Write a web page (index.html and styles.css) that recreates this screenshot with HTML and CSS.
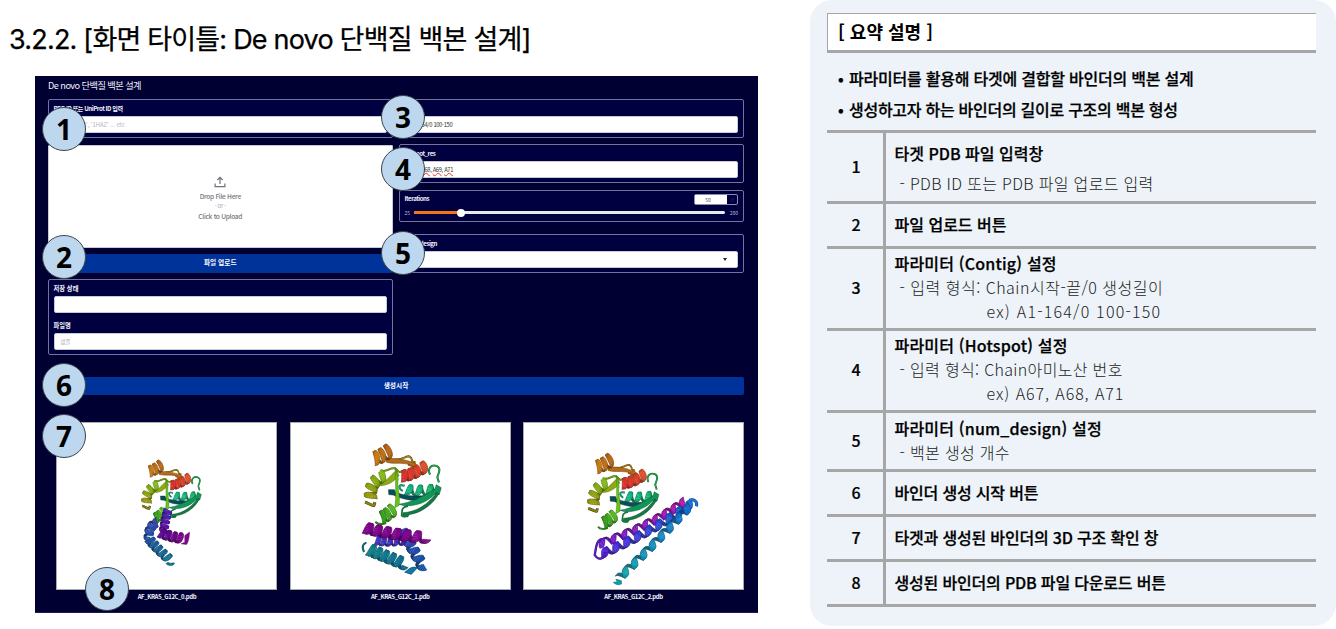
FILE: index.html
```html
<!DOCTYPE html>
<html lang="ko">
<head>
<meta charset="utf-8">
<title>De novo 단백질 백본 설계</title>
<link rel="stylesheet" href="styles.css">
</head>
<body>
<main class="slide">
  <section class="left">
    <h1 class="heading">3.2.2. [화면 타이틀: De novo 단백질 백본 설계]</h1>
    <div class="app">
      <h2 class="app-title">De novo 단백질 백본 설계</h2>
      <div class="columns">
        <div class="col col-input">
          <div class="block"><label class="label latin">PDB ID 또는 UniProt ID 입력</label><div class="field placeholder">Ex) '4HRR', '1HAZ' ... etc</div></div>
          <div class="drop">
            <svg class="drop-icon" viewBox="0 0 12 12"><path d="M6 8V1.4M3.4 4L6 1.3 8.600 4M1.100 7.500V10.700H10.900V7.500"/></svg>
            <span>Drop File Here</span><span class="or">- or -</span><span>Click to Upload</span>
          </div>
          <div class="button upload">파일 업로드</div>
          <div class="block form">
            <label class="label">저장 상태</label><div class="field"></div>
            <label class="label second">파일명</label><div class="field placeholder">샘플</div>
          </div>
        </div>
        <div class="col col-params">
          <div class="block"><label class="label latin">Contig</label><div class="field value">A1-164/0 100-150</div></div>
          <div class="block"><label class="label latin">hotspot_res</label><div class="field value"><span class="spell">A67</span>,<span class="spell">A68</span>, <span class="spell">A69</span>, <span class="spell">A71</span></div></div>
          <div class="block iterations">
            <div class="iter-head"><label class="label latin">Iterations</label><div class="number"><span>50</span><i>↺</i></div></div>
            <div class="slider"><span>25</span><div class="track"><div class="fill"></div><div class="thumb"></div></div><span>200</span></div>
          </div>
          <div class="block design"><label class="label latin">num_design</label><div class="field select"><svg class="caret" viewBox="0 0 4 3"><path d="M0 0H4L2 3Z"/></svg></div></div>
        </div>
      </div>
      <div class="button generate">생성시작</div>
      <div class="cards">
        <figure class="card"><svg class="view" id="model0" viewBox="50 65 663 503"></svg><figcaption>AF_KRAS_G12C_0.pdb</figcaption></figure>
        <figure class="card"><svg class="view" id="model1" viewBox="30 20 663 503"></svg><figcaption>AF_KRAS_G12C_1.pdb</figcaption></figure>
        <figure class="card"><svg class="view" id="model2" viewBox="24 20 663 503"></svg><figcaption>AF_KRAS_G12C_2.pdb</figcaption></figure>
      </div>
      <span class="badge b1">1</span><span class="badge b2">2</span><span class="badge b3">3</span><span class="badge b4">4</span>
      <span class="badge b5">5</span><span class="badge b6">6</span><span class="badge b7">7</span><span class="badge b8">8</span>
    </div>
  </section>
  <aside class="summary">
    <h2 class="summary-title">[ 요약 설명 ]</h2>
    <ul class="points">
      <li><b>•</b><span class="p1">파라미터를 활용해 타겟에 결합할 바인더의 백본 설계</span></li>
      <li><b>•</b><span class="p2">생성하고자 하는 바인더의 길이로 구조의 백본 형성</span></li>
    </ul>
    <div class="table">
      <div class="row r1"><div class="num">1</div><div class="desc"><strong>타겟 PDB 파일 입력창</strong><p>- PDB ID 또는 PDB 파일 업로드 입력</p></div></div>
      <div class="row r2"><div class="num">2</div><div class="desc"><strong>파일 업로드 버튼</strong></div></div>
      <div class="row r3"><div class="num">3</div><div class="desc"><strong class="wide">파라미터 (Contig) 설정</strong><p class="long">- 입력 형식: Chain시작-끝/0 생성길이</p><p class="ex ex-contig">ex) A1-164/0 100-150</p></div></div>
      <div class="row r4"><div class="num">4</div><div class="desc"><strong class="wide">파라미터 (Hotspot) 설정</strong><p>- 입력 형식: Chain아미노산 번호</p><p class="ex">ex) A67, A68, A71</p></div></div>
      <div class="row r5"><div class="num">5</div><div class="desc"><strong class="wide">파라미터 (num_design) 설정</strong><p>- 백본 생성 개수</p></div></div>
      <div class="row r6"><div class="num">6</div><div class="desc"><strong class="tight">바인더 생성 시작 버튼</strong></div></div>
      <div class="row r7"><div class="num">7</div><div class="desc"><strong class="tight">타겟과 생성된 바인더의 3D 구조 확인 창</strong></div></div>
      <div class="row r8"><div class="num">8</div><div class="desc"><strong class="tight">생성된 바인더의 PDB 파일 다운로드 버튼</strong></div></div>
    </div>
  </aside>
</main>
<script src="models.js"></script>
</body>
</html>
```
FILE: styles.css
```css
* { box-sizing: border-box; }
body { margin: 0; background: #fff; color: #000; font-family: "Noto Sans CJK KR", "Noto Sans", sans-serif; }
h1, h2, p, ul, figure { margin: 0; padding: 0; }
.slide { display: flex; width: 1336px; height: 629px; overflow: hidden; }
.left { width: 810px; flex: none; }
.heading { height: 76px; padding-left: 9px; font-family: Inter, "Noto Sans CJK KR", sans-serif; font-size: 27px; font-weight: 400; line-height: 79px; letter-spacing: -0.8px; white-space: nowrap; -webkit-text-stroke: 0.25px #000; }

.app { position: relative; width: 723px; height: 536.5px; margin-left: 35px; padding: 0 14px 0 13px; background: #000033; color: #f2f2fa; font-size: 6.4px; border-bottom: 1px solid #1b1b50; }
.app-title { height: 23px; line-height: 18px; font-size: 9.2px; font-weight: 400; letter-spacing: -0.55px; white-space: nowrap; }
.columns { display: grid; grid-template-columns: 344.5px 344.5px; column-gap: 6.5px; height: 256px; }
.col { display: flex; flex-direction: column; }
.block { flex: none; height: 38.5px; padding: 3.5px 4.5px 0; background: #000040; border: 1px solid #74749b; border-radius: 2px; }
.label { display: block; height: 12.5px; line-height: 9px; font-size: 6.3px; font-weight: 600; white-space: nowrap; }
.latin { font-size: 6.1px; letter-spacing: -0.45px; }
.field { height: 17px; padding-left: 5.5px; background: #fff; border: 1px solid #c9c9d8; border-radius: 2px; line-height: 15px; font-size: 5.8px; color: #333; white-space: pre; }
.value { letter-spacing: -0.35px; }
.placeholder { color: #b4b4bc; }
.drop { display: flex; flex-direction: column; align-items: center; height: 103.5px; margin-top: 7px; padding: 30px 0 0 0; background: #fff; border: 1px solid #c9c9d8; border-radius: 1px; color: #777780; font-size: 6.6px; font-weight: 500; letter-spacing: -0.3px; line-height: 10.2px; }
.drop-icon { width: 12px; height: 12px; margin-bottom: 3px; fill: none; stroke: #70707a; stroke-width: 1.2; }
.or { color: #aaaab2; font-size: 6px; font-weight: 400; }
.button { background: #003399; color: #fff; font-weight: 600; font-size: 6.7px; text-align: center; border-radius: 2px; }
.upload { height: 19px; margin-top: 6px; line-height: 17px; }
.form { height: 76px; margin-top: 6px; }
.second { margin-top: 7.5px; }
.col-params { gap: 6.8px; }
.spell { text-decoration-line: underline; text-decoration-style: wavy; text-decoration-color: #f03030; text-decoration-thickness: 0.5px; text-underline-offset: 0; }
.iterations { height: 32px; }
.iter-head { display: flex; justify-content: space-between; height: 13px; }
.number { display: flex; width: 44px; height: 11px; border: 1px solid #8b8bac; border-radius: 2px; font-size: 5px; line-height: 9px; text-align: center; color: #555; }
.number span { width: 32px; padding-right: 6px; background: #fff; }
.number i { width: 10px; font-style: normal; color: #28285e; }
.slider { display: flex; align-items: center; height: 9px; margin-top: 1px; font-size: 5px; line-height: 9px; color: #b9b9cc; }
.slider > span { width: 9.500px; }
.slider > span:last-child { width: 13px; text-align: right; }
.track { display: flex; align-items: center; flex: 1; height: 3.5px; border-radius: 2px; background: #e8e8ec; }
.fill { width: 43.500px; height: 3.5px; border-radius: 2px; background: #f97316; }
.thumb { width: 8px; height: 8px; flex: none; margin-left: -1px; border-radius: 50%; background: #fff; }
.design { margin-top: 6px; }
.select { display: flex; justify-content: flex-end; align-items: center; padding-right: 10px; }
.caret { width: 4px; height: 3px; fill: #222; }
.generate { height: 18px; margin-top: 22px; line-height: 16px; }
.cards { display: flex; gap: 12.300px; margin: 26.5px 0 0 8.400px; }
.card { width: 221px; flex: none; text-align: center; font-size: 6px; font-weight: 600; letter-spacing: -0.4px; line-height: 13px; }
.view { display: block; width: 221px; height: 168px; background: #fff; border: 1px solid #aaa; }

.badge { position: absolute; display: block; width: 44px; height: 44px; border: 1.5px solid #3a444e; border-radius: 50%; background: #bdd7ee; color: #000; font: 700 28px/42px "Noto Sans", sans-serif; text-align: center; }
.b1 { left: 7px; top: 31px; }
.b2 { left: 7px; top: 159px; }
.b3 { left: 346px; top: 19px; }
.b4 { left: 346px; top: 71px; }
.b5 { left: 346px; top: 155px; }
.b6 { left: 7px; top: 287px; }
.b7 { left: 7px; top: 338px; }
.b8 { left: 50px; top: 491px; }

.summary { width: 525.5px; height: 626px; flex: none; padding: 13px 20px 0 17px; background: #edf3f8; border-radius: 22px; }
.summary-title { height: 40px; padding-left: 10px; background: #fff; border: solid #a6a6a6; border-width: 1px 0 3px 1px; font-size: 18px; font-weight: 600; line-height: 35px; white-space: pre; }
.points { height: 77px; padding: 10px 0 0 11px; list-style: none; font-size: 16px; font-weight: 500; line-height: 30.500px; -webkit-text-stroke: 0.25px #000; }
.points li { display: flex; gap: 6px; height: 30.500px; white-space: nowrap; }
.points b { width: 5px; font-weight: 500; }
.p1 { letter-spacing: -0.22px; }
.p2 { letter-spacing: -0.27px; }
.table { border-top: 3px solid #a6a6a6; font-size: 16px; }
.row { display: grid; grid-template-columns: 56px 1fr; border-bottom: 3px solid #a6a6a6; line-height: 24px; white-space: pre; }
.num { display: flex; align-items: center; justify-content: center; padding: 0 0 2px 2px; font-weight: 500; -webkit-text-stroke: 0.2px #000; }
.desc { display: flex; flex-direction: column; justify-content: center; padding: 0 0 2px 8.500px; border-left: 3px solid #a6a6a6; }
.desc strong { font-weight: 500; -webkit-text-stroke: 0.25px #000; }
.wide { letter-spacing: 0.2px; }
.tight { letter-spacing: -0.18px; }
.desc p { padding-left: 5px; font-weight: 300; letter-spacing: 0.33px; color: #222; }
.desc .long { letter-spacing: 0.5px; }
.desc .ex { padding-left: 92px; letter-spacing: 0.93px; }
.desc .ex-contig { letter-spacing: 1.22px; }
.r1 { height: 70.500px; line-height: 30px; }
.r1 .desc { padding: 2px 0 0 8.500px; }
.r2 { height: 45px; }
.r3, .r4 { height: 82px; }
.r5 { height: 59px; }
.r6, .r7, .r8 { height: 45px; }
```
FILE: models.js
```js
// Draws ribbon diagrams: each helix is a band sampled along a curved axis,
// with the far side of every turn shaded and painted first.
const NS = "http://www.w3.org/2000/svg";

function el(parent, name, attrs) {
  const node = document.createElementNS(NS, name);
  for (const key in attrs) node.setAttribute(key, attrs[key]);
  parent.appendChild(node);
  return node;
}

function shade(from, to, t, light) {
  return "rgb(" + from.map((v, i) => Math.min(255, Math.round((v + (to[i] - v) * t) * light))).join(",") + ")";
}

function axis(points, t) {
  const [a, b, c] = points.length === 3 ? points : [points[0], [(points[0][0] + points[1][0]) / 2, (points[0][1] + points[1][1]) / 2], points[1]];
  const u = 1 - t;
  const x = u * u * a[0] + 2 * u * t * b[0] + t * t * c[0];
  const y = u * u * a[1] + 2 * u * t * b[1] + t * t * c[1];
  const dx = 2 * u * (b[0] - a[0]) + 2 * t * (c[0] - b[0]);
  const dy = 2 * u * (b[1] - a[1]) + 2 * t * (c[1] - b[1]);
  const len = Math.hypot(dx, dy);
  return { x, y, tx: dx / len, ty: dy / len };
}

function helix(parent, points, turns, radius, width, from, to) {
  const steps = Math.round(turns * 20);
  const samples = [];
  for (let i = 0; i <= steps; i++) {
    const t = i / steps;
    const angle = t * turns * Math.PI * 2;
    const p = axis(points, t);
    const side = Math.cos(angle) * radius;
    const lean = Math.sin(angle) * radius * 0.24;
    samples.push({
      x: p.x - p.ty * side + p.tx * lean, y: p.y + p.tx * side + p.ty * lean,
      tx: p.tx, ty: p.ty, z: Math.sin(angle), t,
      w: width * (Math.sin(angle) < 0 ? 0.4 : 0.4 + 0.5 * Math.sin(angle))
    });
  }
  const segments = [];
  for (let i = 0; i < steps; i++) segments.push([samples[i], samples[i + 1]]);
  segments.sort((m, n) => m[0].z - n[0].z);
  for (const [p, q] of segments) {
    const light = p.z < 0 ? 0.6 : 0.72 + 0.3 * p.z;
    const color = shade(from, to, p.t, light);
    const edge = (s, k) => (s.x + s.tx * s.w * k).toFixed(1) + " " + (s.y + s.ty * s.w * k).toFixed(1);
    el(parent, "path", { d: `M${edge(p, -1)}L${edge(q, -1)}L${edge(q, 1)}L${edge(p, 1)}Z`, fill: color, stroke: color, "stroke-width": 1 });
    const outline = shade(from, to, p.t, 0.4);
    el(parent, "path", { d: `M${edge(p, -1)}L${edge(q, -1)}M${edge(p, 1)}L${edge(q, 1)}`, stroke: outline, "stroke-width": 1.2, fill: "none" });
  }
}

function strand(parent, d, width, color, dark) {
  el(parent, "path", { d, fill: "none", stroke: dark, "stroke-width": width + 2, "stroke-linejoin": "round" });
  el(parent, "path", { d, fill: "none", stroke: color, "stroke-width": Math.max(2, width - 1), "stroke-linejoin": "round" });
}

function sheet(parent, d, color, dark) {
  el(parent, "path", { d, fill: color, stroke: dark, "stroke-width": 1.5, "stroke-linejoin": "round" });
}

// The target protein is shared by all three models.
function target(svg, transform) {
  const g = el(svg, "g", { transform });
  strand(g, "M451 176C442 158 455 145 470 150C486 156 478 170 473 184L478 200", 4, "#23b457", "#13682f");
  strand(g, "M374 210C352 204 356 218 368 226", 4, "#12b78b", "#08664d");
  helix(g, [[378, 222], [420, 227], [472, 220]], 3, 16, 10, [20, 180, 135], [20, 180, 100]);
  sheet(g, "M325 222L343 222L346 229C385 247 417 239 456 241L440 253C400 258 368 252 339 238L326 237Z", "#064f57", "#022b30");
  sheet(g, "M356 266C390 263 428 244 466 220L470 207L485 216L479 237L465 236C442 260 410 272 374 271Z", "#119657", "#06502d");
  sheet(g, "M477 235C457 271 419 294 389 297L383 305L368 301L369 292C406 290 443 270 472 230Z", "#137a43", "#064225");
  strand(g, "M384 272C363 276 367 283 365 300C370 306 379 304 384 300", 3, "#219b49", "#0e5727");
  strand(g, "M345 131C368 132 376 120 388 121C404 128 387 138 407 139M384 146C402 150 405 159 389 166", 4, "#b88e20", "#604808");
  sheet(g, "M317 128C353 126 375 130 408 143L415 162C401 155 396 145 373 143C354 140 338 145 319 139Z", "#b66b18", "#5c300a");
  helix(g, [[281, 128], [305, 121], [330, 101]], 2.7, 22, 9, [205, 125, 18], [180, 95, 20]);
  strand(g, "M301 163C320 172 328 153 346 158C356 166 357 173 367 165", 4, "#83b615", "#45630b");
  sheet(g, "M290 202C317 204 328 180 350 163L357 180C336 204 313 212 291 209Z", "#8eaa10", "#4b5906");
  helix(g, [[272, 250], [263, 205], [307, 180]], 3.4, 19, 10, [155, 155, 15], [125, 185, 18]);
  strand(g, "M254 260C267 264 271 269 281 270L284 260", 7, "#8a8315", "#3e3a07");
  sheet(g, "M345 154L355 190C349 212 362 235 357 270L344 277C350 240 345 216 347 190Z", "#69c41b", "#387909");
  strand(g, "M318 323C310 326 292 329 286 319", 4, "#32a91f", "#185c0e");
  helix(g, [[303, 307], [321, 300], [340, 281]], 2.6, 20, 8, [50, 160, 28], [85, 185, 25]);
  helix(g, [[366, 181], [400, 177], [437, 151]], 3.6, 18, 11, [220, 48, 45], [220, 75, 35]);
}

const first = document.getElementById("model0");
target(first, "translate(111.250 110.850) scale(.775 .79)");
helix(first, [[386, 328], [377, 360], [373, 394]], 4.5, 13, 7, [75, 35, 195], [100, 10, 160]);
helix(first, [[362, 397], [393, 410], [426, 414]], 3.6, 16, 9, [90, 10, 150], [120, 0, 135]);
sheet(first, "M426 431L437 426L437 406L451 396C451 414 445 432 442 433Z", "#86068f", "#4b0051");
helix(first, [[353, 366], [325, 378], [328, 416]], 3.3, 14, 8, [55, 70, 180], [30, 85, 175]);
helix(first, [[329, 417], [351, 444], [388, 476]], 4.6, 15, 8, [30, 85, 165], [12, 115, 145]);
sheet(first, "M386 487C397 494 400 486 406 490C402 501 383 497 380 491Z", "#087993", "#054957");

const second = document.getElementById("model1");
target(second, "");
helix(second, [[365, 345], [388, 382], [430, 456]], 5.3, 17, 11, [60, 60, 200], [15, 85, 165]);
helix(second, [[287, 373], [325, 380], [381, 371]], 4.8, 17, 8, [65, 55, 205], [65, 35, 180]);
helix(second, [[255, 338], [335, 358], [438, 367]], 6.2, 18, 14, [125, 0, 140], [135, 10, 145]);
helix(second, [[266, 404], [315, 423], [374, 447]], 5.2, 19, 11, [15, 130, 140], [12, 110, 150]);
strand(second, "M251 411C242 392 250 385 258 383", 4, "#12818b", "#074b50");
sheet(second, "M374 472C389 462 392 453 414 458L394 479Z", "#1476a8", "#063e58");

const third = document.getElementById("model2");
target(third, "translate(-16.250 32.590) scale(.925 .946)");
helix(third, [[511, 257], [404, 334], [254, 386]], 8.500, 13, 10, [180, 15, 175], [105, 22, 210]);
helix(third, [[258, 417], [402, 355], [529, 266]], 8.500, 14, 13, [85, 30, 220], [15, 105, 210]);
strand(third, "M261 372C242 373 242 401 238 420C250 439 268 431 271 411", 5, "#6222ca", "#351075");
strand(third, "M525 254C538 249 551 258 546 272", 7, "#1777dc", "#083e7d");
helix(third, [[526, 272], [424, 383], [312, 490]], 8, 13, 13, [18, 110, 210], [10, 165, 170]);
sheet(third, "M294 503L306 501L302 493L319 498L319 508C310 512 303 510 294 503Z", "#119fa4", "#056166");
```
